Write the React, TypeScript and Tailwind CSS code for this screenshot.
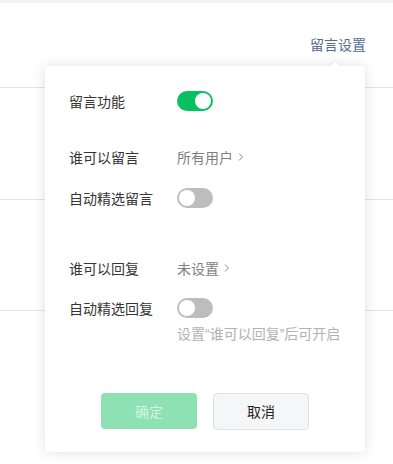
import React from "react";

const font = { fontFamily: '"Noto Sans CJK SC", "Noto Sans", sans-serif' };

function Toggle({ on }: { on: boolean }) {
  return (
    <div
      className={
        "relative w-[36px] h-[20px] rounded-full " +
        (on ? "bg-[#07c160]" : "bg-[#bdbdbd]")
      }
    >
      <div
        className={
          "absolute top-[2px] w-[16px] h-[16px] rounded-full bg-white " +
          (on ? "right-[2px]" : "left-[2px]")
        }
      />
    </div>
  );
}

function Chevron() {
  return (
    <svg width="6" height="10" viewBox="0 0 6 10" className="ml-[5px]">
      <path d="M1 1.5 L4.5 5 L1 8.5" fill="none" stroke="#8a8a8a" strokeWidth="1" />
    </svg>
  );
}

function Row({ label, children, className = "" }: { label: string; children: React.ReactNode; className?: string }) {
  return (
    <div className={"flex items-center h-[20px] " + className}>
      <div className="w-[108px] text-[14px] leading-[20px] text-[#353535]">{label}</div>
      <div className="flex items-center">{children}</div>
    </div>
  );
}

export default function App() {
  return (
    <div className="relative w-[393px] h-[464px] bg-white overflow-hidden" style={font}>
      <div className="h-[3px] bg-[#f2f3f5]" />
      <div className="h-[85px] border-b border-[#e5e5e5] flex justify-end pr-[27px] pt-[31px]">
        <span className="text-[14px] leading-[20px] text-[#576b95]">留言设置</span>
      </div>
      <div className="h-[112px] border-b border-[#e5e5e5]" />
      <div className="h-[111px] border-b border-[#e5e5e5]" />

      <div className="absolute left-[45px] top-[66px] w-[320px] h-[386px] bg-white rounded-[4px] shadow-[0_0_14px_rgba(0,0,0,0.12)]">
        <div className="absolute -top-[3px] left-[286px] w-[8px] h-[8px] bg-white rotate-45 shadow-[-1px_-1px_3px_rgba(0,0,0,0.06)]" />
        <div className="relative flex flex-col pl-[24px] pt-[25px]">
          <Row label="留言功能">
            <Toggle on={true} />
          </Row>
          <Row label="谁可以留言" className="mt-[36px]">
            <span className="text-[14px] leading-[20px] text-[#7f7f7f]">所有用户</span>
            <Chevron />
          </Row>
          <Row label="自动精选留言" className="mt-[21px]">
            <Toggle on={false} />
          </Row>
          <Row label="谁可以回复" className="mt-[50px]">
            <span className="text-[14px] leading-[20px] text-[#7f7f7f]">未设置</span>
            <Chevron />
          </Row>
          <Row label="自动精选回复" className="mt-[20px]">
            <Toggle on={false} />
          </Row>
          <div className="pl-[108px] mt-[5px] text-[14px] leading-[20px] text-[#b2b2b2]">
            设置<span style={{ fontFamily: '"Liberation Sans", sans-serif' }}>“</span>谁可以回复<span style={{ fontFamily: '"Liberation Sans", sans-serif' }}>”</span>后可开启
          </div>
        </div>
        <div className="flex justify-center gap-4 mt-[49px]">
          <div className="w-[96px] h-[36px] rounded-[4px] bg-[#8ee1b3] flex items-center justify-center text-[14px] text-[#d4f4e2]">
            确定
          </div>
          <div className="w-[96px] h-[37px] rounded-[4px] bg-[#f5f6f7] border border-[#e0e1e3] flex items-center justify-center text-[14px] text-[#222]">
            取消
          </div>
        </div>
      </div>
    </div>
  );
}
